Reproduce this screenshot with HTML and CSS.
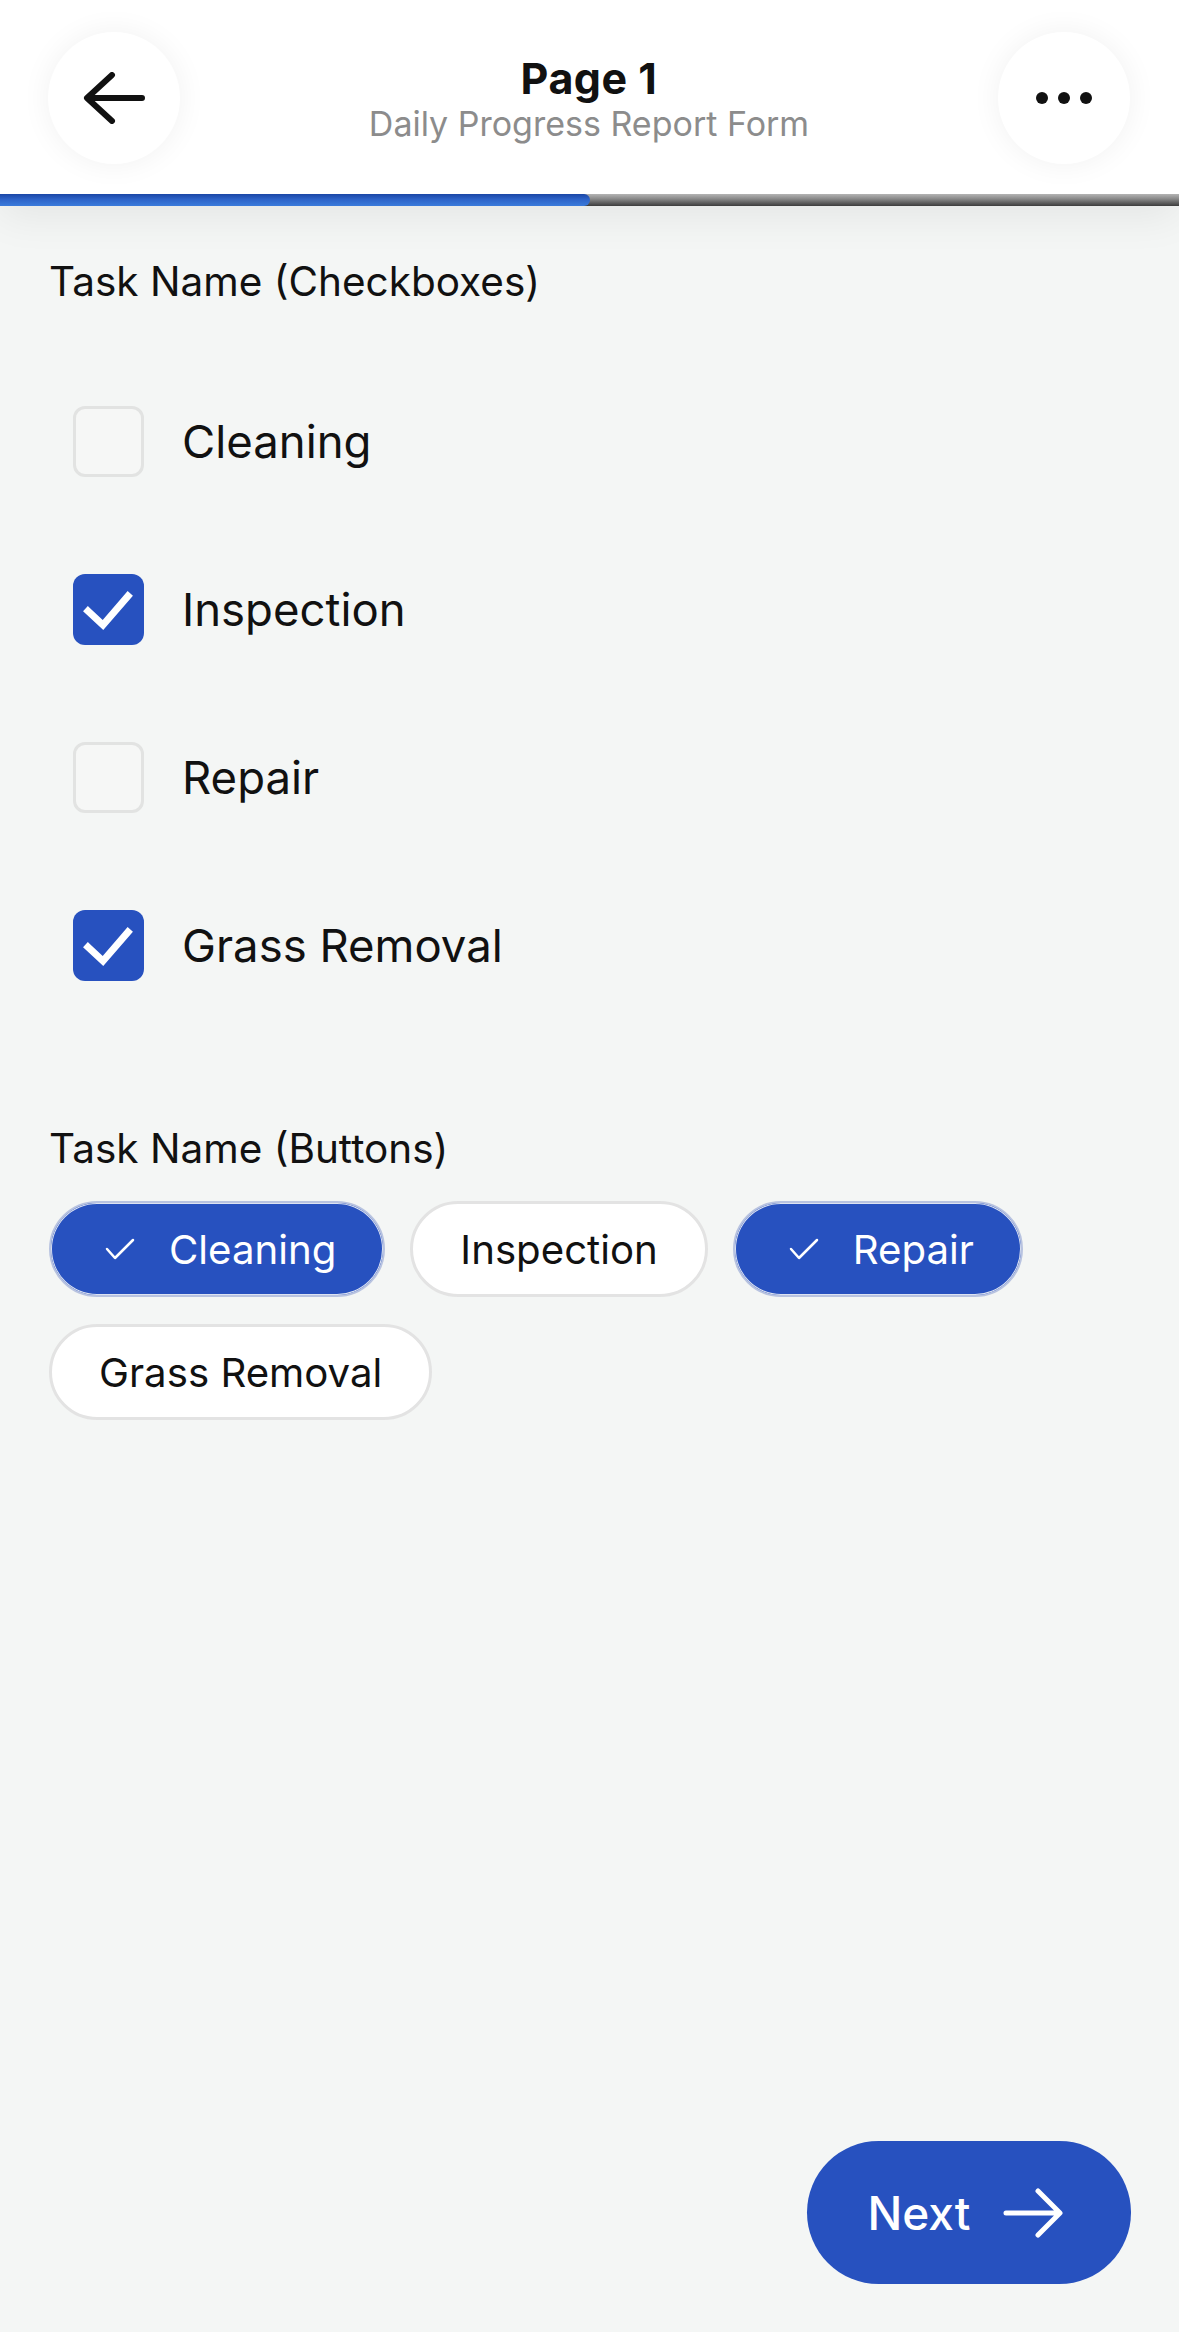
FILE: index.html
```html
<!DOCTYPE html>
<html lang="en">

<head>
    <meta charset="UTF-8">
    <meta name="viewport" content="width=device-width, initial-scale=1.0">
    <title>Daily Progress Report Form</title>
    <link rel="stylesheet" href="styles.css">
</head>

<body>
    <header class="topbar">
        <div class="topbar-row">
            <button class="round-btn" aria-label="Back">
                <svg width="64" height="52" viewBox="0 0 64 52">
                    <path d="M60 26 H6 M30 3 L5 26 L30 49" fill="none" stroke="#111" stroke-width="6"
                        stroke-linecap="round" stroke-linejoin="round" />
                </svg>
            </button>
            <div class="title-block">
                <div class="page-title">Page 1</div>
                <div class="page-subtitle">Daily Progress Report Form</div>
            </div>
            <button class="round-btn" aria-label="More">
                <span class="dots"><i></i><i></i><i></i></span>
            </button>
        </div>
        <div class="progress">
            <div class="progress-fill" style="width: 50%"></div>
        </div>
    </header>

    <main class="form">
        <section class="field">
            <div class="field-label">Task Name (Checkboxes)</div>
            <ul class="check-list">
                <li class="check-item">
                    <span class="box"></span>
                    <span class="check-text">Cleaning</span>
                </li>
                <li class="check-item">
                    <span class="box checked">
                        <svg width="71" height="71" viewBox="0 0 71 71">
                            <path d="M15 37 L30 51 L55 22" fill="none" stroke="#fff" stroke-width="7"
                                stroke-linecap="square" />
                        </svg>
                    </span>
                    <span class="check-text">Inspection</span>
                </li>
                <li class="check-item">
                    <span class="box"></span>
                    <span class="check-text">Repair</span>
                </li>
                <li class="check-item">
                    <span class="box checked">
                        <svg width="71" height="71" viewBox="0 0 71 71">
                            <path d="M15 37 L30 51 L55 22" fill="none" stroke="#fff" stroke-width="7"
                                stroke-linecap="square" />
                        </svg>
                    </span>
                    <span class="check-text">Grass Removal</span>
                </li>
            </ul>
        </section>

        <section class="field field-buttons">
            <div class="field-label">Task Name (Buttons)</div>
            <div class="chips">
                <button class="chip selected">
                    <svg class="chip-check" width="30" height="22" viewBox="0 0 30 22">
                        <path d="M2 11 L10 20 L28 2" fill="none" stroke="#fff" stroke-width="2.5"
                            stroke-linecap="round" stroke-linejoin="round" />
                    </svg>
                    Cleaning
                </button>
                <button class="chip">Inspection</button>
                <button class="chip selected">
                    <svg class="chip-check" width="30" height="22" viewBox="0 0 30 22">
                        <path d="M2 11 L10 20 L28 2" fill="none" stroke="#fff" stroke-width="2.5"
                            stroke-linecap="round" stroke-linejoin="round" />
                    </svg>
                    Repair
                </button>
                <button class="chip">Grass Removal</button>
            </div>
        </section>
    </main>

    <footer class="actions">
        <button class="next-btn">
            Next
            <svg width="62" height="50" viewBox="0 0 62 50">
                <path d="M4 25 H57 M36 3 L58 25 L36 47" fill="none" stroke="#fff" stroke-width="5"
                    stroke-linecap="round" stroke-linejoin="round" />
            </svg>
        </button>
    </footer>
</body>

</html>
```

FILE: styles.css
```css
body {
    font-family: Inter, "Liberation Sans", Arial, sans-serif;
    margin: 0;
    min-height: 100vh;
    display: flex;
    flex-direction: column;
    background: #f4f6f5;
    color: #111;
}

button {
    font-family: inherit;
    border: none;
    cursor: pointer;
}

.topbar {
    background: white;
    box-shadow: 0 10px 40px rgba(0, 0, 0, 0.07);
    position: relative;
    z-index: 1;
}

.topbar-row {
    display: flex;
    align-items: center;
    justify-content: space-between;
    padding: 32px 49px 30px 48px;
}

.round-btn {
    width: 132px;
    height: 132px;
    border-radius: 50%;
    background: white;
    box-shadow: 0 0 30px rgba(0, 0, 0, 0.06);
    display: flex;
    align-items: center;
    justify-content: center;
    padding: 0;
}

.dots {
    display: flex;
    gap: 10px;
}

.dots i {
    width: 12px;
    height: 12px;
    border-radius: 50%;
    background: #111;
}

.title-block {
    text-align: center;
    padding-top: 2px;
}

.page-title {
    font-size: 43px;
    font-weight: 700;
    letter-spacing: 0.5px;
    line-height: 50px;
    color: #111;
}

.page-subtitle {
    font-size: 34px;
    line-height: 42px;
    color: #8c8c8c;
}

.progress {
    height: 12px;
    background: linear-gradient(#b4b4b4, #8a8a8a 40%, #5c5c5c 75%, #3c3c3c);
}

.progress-fill {
    height: 100%;
    border-radius: 0 6px 6px 0;
    background: linear-gradient(#1b47a6, #2d63c8 45%, #3a7bdb);
}

.form {
    padding: 52px 49px 0;
}

.field-label {
    font-size: 40.5px;
    line-height: 48px;
}

.check-list {
    list-style: none;
    margin: 51px 0 0;
    padding: 0;
}

.check-item {
    height: 168px;
    display: flex;
    align-items: center;
    padding-left: 24px;
}

.box {
    width: 71px;
    height: 71px;
    box-sizing: border-box;
    border: 3px solid #e2e3e2;
    border-radius: 12px;
    background: #f6f7f6;
    margin-right: 38px;
    flex: none;
}

.box.checked {
    background: #2751bf;
    border: none;
}

.box.checked svg {
    display: block;
}

.check-text {
    font-size: 45.5px;
}

.field-buttons {
    margin-top: 96px;
}

.chips {
    display: flex;
    flex-wrap: wrap;
    gap: 27px 25px;
    margin-top: 28px;
}

.chip {
    height: 96px;
    box-sizing: border-box;
    padding: 0 47px;
    border-radius: 48px;
    border: 3px solid #e3e3e3;
    background: white;
    color: #111;
    font-size: 40.2px;
    display: flex;
    align-items: center;
}

.chip.selected {
    background: #2751bf;
    color: white;
    border: 2px solid #b8c3e0;
    box-shadow: inset 0 0 0 1px #dde3f2;
    padding-left: 54px;
}

.chip-check {
    margin-right: 34px;
}

.actions {
    margin-top: auto;
    display: flex;
    justify-content: flex-end;
    padding: 0 48px 48px;
}

.next-btn {
    width: 324px;
    height: 143px;
    border-radius: 72px;
    background: #2751bf;
    color: white;
    font-size: 46px;
    font-weight: 500;
    display: flex;
    align-items: center;
    justify-content: center;
    gap: 32px;
    padding: 0 6px 0 0;
}
```
